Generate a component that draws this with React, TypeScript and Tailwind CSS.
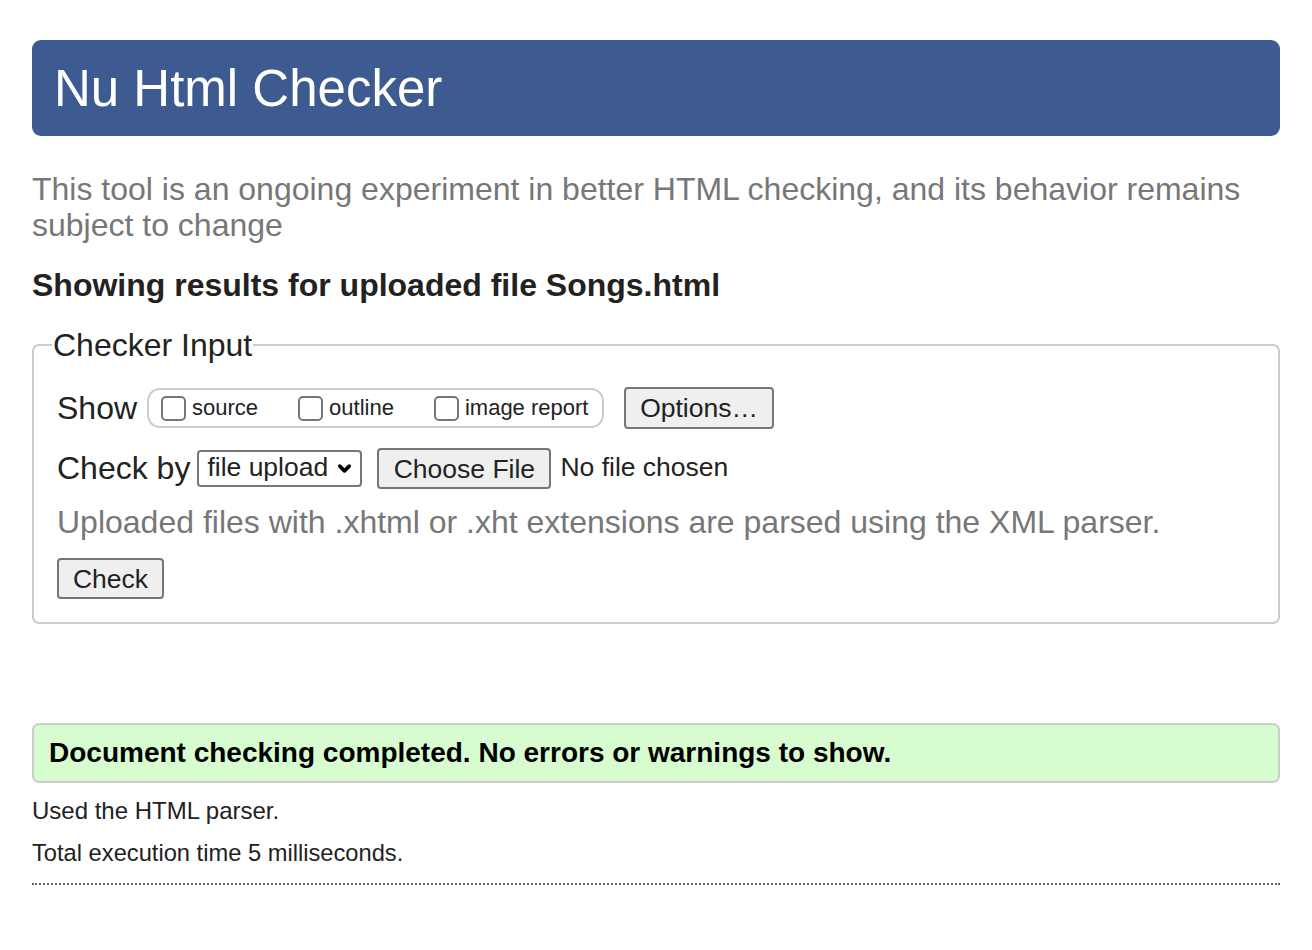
import { ChevronDown } from "lucide-react";

const font = "font-['Liberation_Sans',Arial,sans-serif]";

function Box({ label, className }: { label: string; className?: string }) {
  return (
    <label className={`flex items-end ${className ?? ""}`}>
      <span className="w-[25px] h-[25px] border-2 border-[#767676] rounded-[5px] bg-white mb-[3px]" />
      <span className="ml-[6px] text-[22px] text-[#222]">{label}</span>
    </label>
  );
}

export default function App() {
  return (
    <main className={`${font} bg-white min-h-[950px] px-[32px] pt-[40px] text-[#222]`}>
      <header className="bg-[#3e5b91] rounded-[9px] h-[96px] flex items-center px-[22px]">
        <h1 className="text-white text-[51px] leading-none">Nu Html Checker</h1>
      </header>

      <p className="mt-[35px] text-[32px] leading-[36px] text-[#777]">
        This tool is an ongoing experiment in better HTML checking, and its behavior remains
        subject to change
      </p>

      <h2 className="mt-[24px] text-[32px] leading-[36px] font-bold text-[#222]">
        Showing results for uploaded file Songs.html
      </h2>

      <fieldset className="mt-[24px] border-2 border-[#ccc] rounded-[7px] px-[23px] pb-[23px] pt-[23px]">
        <legend className="text-[32px] leading-[36px] px-[1px] ml-[-5px]">Checker Input</legend>

        <div className="flex items-center h-[44px]">
          <span className="text-[32px]">Show</span>
          <div className="ml-[10px] h-[40px] w-[457px] border-2 border-[#ccc] rounded-[13px] flex items-center px-[12px] pb-[2px]">
            <Box label="source" />
            <Box label="outline" className="ml-[40px]" />
            <Box label="image report" className="ml-[40px]" />
          </div>
          <button className="ml-[20px] h-[42px] w-[150px] bg-[#efefef] border-2 border-[#767676] rounded-[4px] text-[26.5px]">
            Options…
          </button>
        </div>

        <div className="flex items-center h-[44px] mt-[16px]">
          <span className="text-[32px]">Check by</span>
          <div className="ml-[7px] h-[37px] w-[165px] border-2 border-[#767676] rounded-[4px] flex items-center justify-between pl-[8px] pr-[6px] bg-white">
            <span className="text-[26.5px]">file upload</span>
            <ChevronDown className="w-[19px] h-[19px] text-black" strokeWidth={4.5} />
          </div>
          <button className="ml-[15px] h-[41px] w-[174px] bg-[#efefef] border-2 border-[#767676] rounded-[4px] text-[26.5px]">
            Choose File
          </button>
          <span className="ml-[9px] text-[26.5px]">No file chosen</span>
        </div>

        <p className="mt-[14px] text-[32px] leading-[36px] text-[#777]">
          Uploaded files with .xhtml or .xht extensions are parsed using the XML parser.
        </p>

        <button className="mt-[18px] h-[41px] w-[107px] bg-[#efefef] border-2 border-[#767676] rounded-[4px] text-[26.5px]">
          Check
        </button>
      </fieldset>

      <div className="mt-[99px] h-[60px] bg-[#d7fcd0] border-2 border-[#ccc] rounded-[7px] flex items-center px-[15px]">
        <p className="text-[28px] font-bold text-black">
          Document checking completed. No errors or warnings to show.
        </p>
      </div>

      <p className="mt-[14px] text-[24px] leading-[28px]">Used the HTML parser.</p>
      <p className="mt-[14px] text-[23.7px] leading-[28px]">Total execution time 5 milliseconds.</p>
      <div className="mt-[16px] border-t-2 border-dotted border-[#666]" />
    </main>
  );
}
